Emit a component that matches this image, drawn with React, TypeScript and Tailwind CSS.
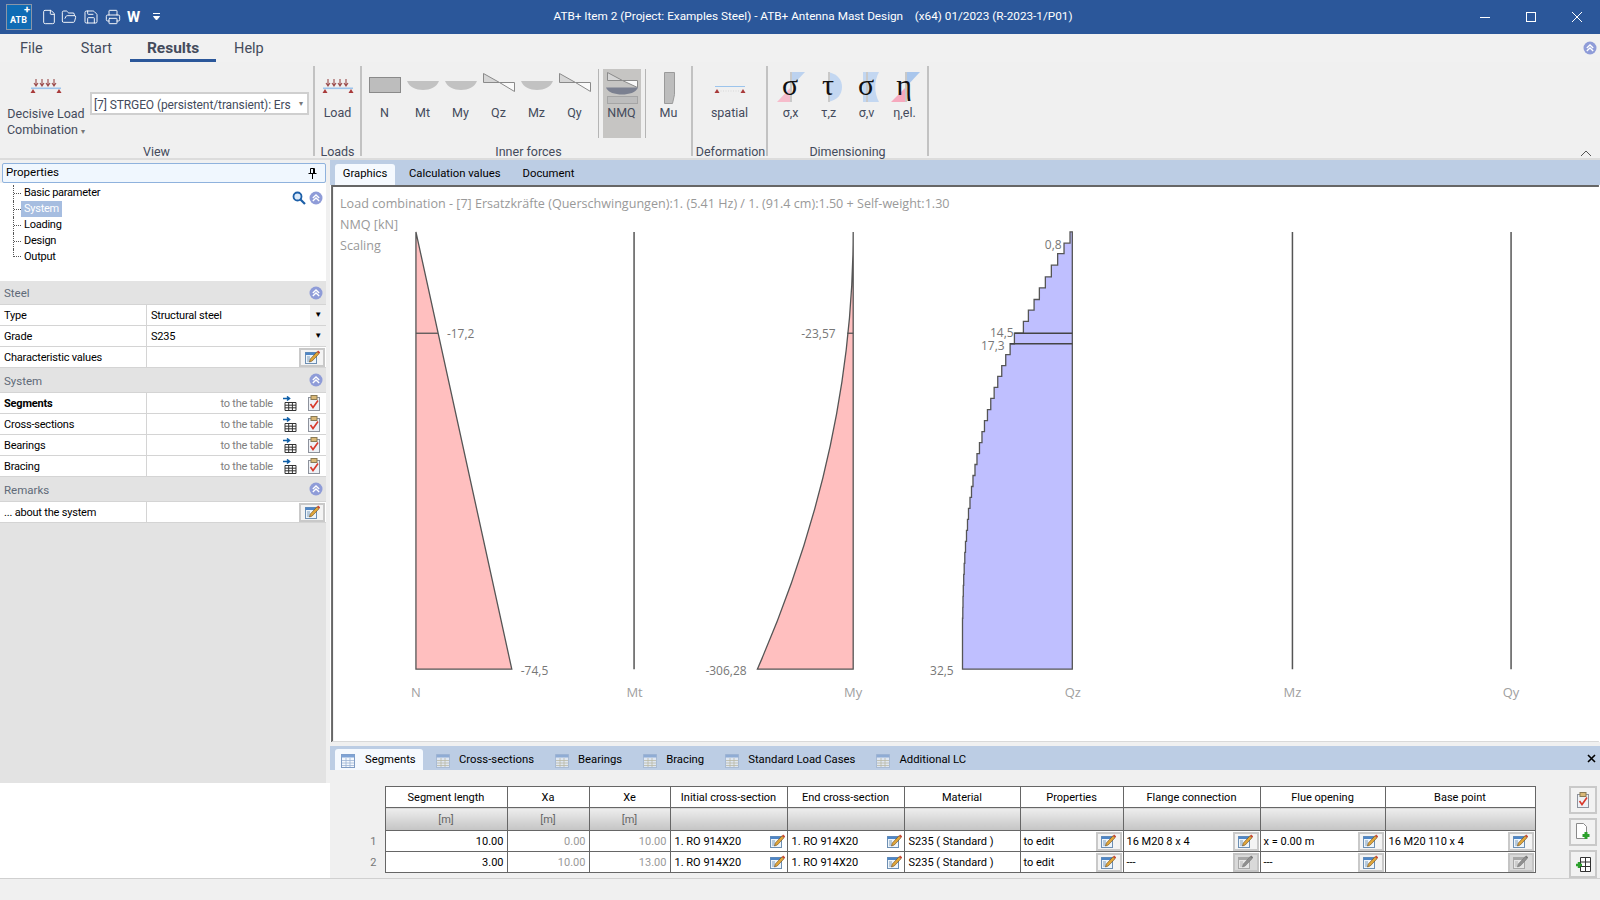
import type { ReactNode } from "react"
import { File, FolderOpen, Printer, Save } from "lucide-react"

function ChevronCircle() {
  return (
    <svg width="14" height="14" viewBox="0 0 14 14" className="shrink-0">
      <circle cx="7" cy="7" r="6.5" fill="#8f9cd8" />
      <path d="M3.8 7 7 4l3.2 3M3.8 10 7 7l3.2 3" fill="none" stroke="#fff" strokeWidth="1.3" />
    </svg>
  )
}

function EditIcon({ off = false }: { off?: boolean }) {
  return (
    <svg width="15" height="14" viewBox="0 0 15 14">
      <rect x="0.5" y="2.5" width="11" height="11" fill={off ? "#e6e6e6" : "#eef5fb"} stroke={off ? "#a8a8a8" : "#6d8fb3"} />
      <rect x="0.5" y="2.5" width="11" height="2.5" fill={off ? "#a8a8a8" : "#4f86c6"} />
      <path d="M2 7h3M2 9h3M2 11h3" stroke={off ? "#b5b5b5" : "#7f9ebd"} />
      <path d="m4.5 12 .8-3L12 1.8 14 3.8 7.2 11z" fill={off ? "#8f8f8f" : "#e0a63a"} stroke={off ? "#777" : "#6a4a1c"} strokeWidth="0.6" />
      <path d="m12 1.8 1.2-1.3 2 2L14 3.8z" fill={off ? "#777" : "#c8452f"} />
    </svg>
  )
}

function ClipboardIcon() {
  return (
    <svg width="14" height="16" viewBox="0 0 14 16">
      <rect x="1.5" y="2.5" width="11" height="13" fill="#eef1f6" stroke="#8d929c" />
      <rect x="4" y="0.5" width="6" height="4" fill="#d9b877" stroke="#8a7a55" />
      <path d="m3.5 9 2.5 3.5 5-7" fill="none" stroke="#d8392b" strokeWidth="1.6" />
    </svg>
  )
}

function TableArrowIcon() {
  return (
    <svg width="15" height="15" viewBox="0 0 15 15">
      <path d="M3 6.5h11v8H3zM3 9.2h11M3 11.8h11M6.7 6.5v8M10.4 6.5v8" fill="#fff" stroke="#333" />
      <path d="M1 2.5h6M5 .5l2.5 2L5 4.5" fill="none" stroke="#0f5fa8" strokeWidth="1.6" />
    </svg>
  )
}

function TabGridIcon({ active = false }: { active?: boolean }) {
  return (
    <svg width="14" height="14" viewBox="0 0 14 14" className="shrink-0">
      <rect x="0.5" y="0.5" width="13" height="13" fill={active ? "#f4f8fd" : "#dfe7f2"} stroke={active ? "#7f9cc4" : "#a9bbd4"} />
      <rect x="0.5" y="0.5" width="13" height="3" fill={active ? "#7ea3d6" : "#8facd4"} />
      <path d="M1 6.5h12M1 9h12M1 11.5h12M5 4v9M9 4v9" stroke={active ? "#9db4d4" : "#b9b9a5"} strokeWidth="0.8" />
    </svg>
  )
}

function SupportBeam() {
  return (
    <svg width="32" height="16" viewBox="0 0 32 16">
      {[6, 12, 18, 24].map((x) => (
        <path key={x} d={`M${x} 1v6m-2-2 2 3 2-3`} fill="none" stroke="#9a4a4a" strokeWidth="1.1" />
      ))}
      <rect x="1" y="9.5" width="30" height="1.6" fill="#9cc4ec" />
      <path d="M3 11l-2.5 4h5zM29 11l-2.5 4h5z" fill="#a83a3a" />
    </svg>
  )
}

function BarIcon() {
  return (
    <svg width="38" height="36" viewBox="0 0 38 36">
      <rect x="3.5" y="8.5" width="31" height="15" fill="#bdbdbd" stroke="#8a8a8a" />
    </svg>
  )
}

function MomentIcon() {
  return (
    <svg width="38" height="36" viewBox="0 0 38 36">
      <path d="M3 12h32c-2 6-9 9-16 9S5 18 3 12z" fill="#c2c2c2" />
    </svg>
  )
}

function ShearIcon() {
  return (
    <svg width="38" height="36" viewBox="0 0 38 36">
      <path d="M3.5 4.5v9h16z" fill="#d6d6d6" stroke="#8a8a8a" />
      <path d="M19.5 13.5h15v9z" fill="#fafafa" stroke="#8a8a8a" />
    </svg>
  )
}

function NmqIcon() {
  return (
    <svg width="38" height="36" viewBox="0 0 38 36">
      <path d="M4.5 3.5v8h15z" fill="#d6d6d6" stroke="#8a8a8a" />
      <path d="M19.5 11.5h15v7z" fill="#fafafa" stroke="#8a8a8a" />
      <path d="M3 18.5h32c-2 5-9 7-16 7s-14-2-16-7z" fill="#7b8090" />
      <rect x="4.5" y="27.5" width="30" height="7" fill="#bdbdbd" stroke="#a5a5a5" />
    </svg>
  )
}

function MuIcon() {
  return (
    <svg width="38" height="36" viewBox="0 0 38 36">
      <path d="M14.5 3.5h10v22l-2 9h-8z" fill="#bdbdbd" stroke="#9a9a9a" />
    </svg>
  )
}

function SpatialIcon() {
  return (
    <svg width="38" height="36" viewBox="0 0 38 36">
      <rect x="4" y="17" width="30" height="1" fill="#9cc4ec" />
      <path d="M7 22h24" stroke="#d8d8d8" strokeDasharray="1 1.5" />
      <path d="M6 20l-2.5 4h5zM32 20l-2.5 4h5z" fill="#a83a3a" />
    </svg>
  )
}

function StressIcon({ glyph, kind }: { glyph: string; kind: "sx" | "tz" | "sv" | "eta" }) {
  return (
    <svg width="38" height="36" viewBox="0 0 38 36">
      {kind === "sx" && (
        <>
          <path d="M19 3h14L19 18z" fill="#bcd2ef" />
          <path d="M19 18v15H5z" fill="#f6bccb" />
        </>
      )}
      {kind === "tz" && <path d="M18 3c10 2 14 8 14 15s-4 13-14 15z" fill="#c3d7f1" />}
      {kind === "sv" && <path d="M15 3h16c-5 9-5 21 0 30H15z" fill="#c3d7f1" />}
      {kind === "eta" && (
        <>
          <path d="M20 3h14L20 18z" fill="#a9c6ec" />
          <path d="M20 18v15H5z" fill="#f6a9bd" />
        </>
      )}
      <rect x={kind === "eta" ? 19 : 18} y="3" width="2" height="30" fill="#c9c9c9" />
      <text x="18" y="26" textAnchor="middle" fontSize="30" fill="#111" className="font-['Liberation_Serif',serif]">
        {glyph}
      </text>
    </svg>
  )
}

function RibbonButton({ icon, label, active = false }: { icon: ReactNode; label: string; active?: boolean }) {
  return (
    <div className={`flex h-[69px] w-[38px] flex-col items-center ${active ? "bg-[#c6c5c3]" : ""}`}>
      <div className="h-[36px]">{icon}</div>
      <span className="text-[12.5px] leading-4 whitespace-nowrap text-[#444b5c]">{label}</span>
    </div>
  )
}

function RibbonGroup({
  label,
  width,
  labelPad = "",
  children,
}: {
  label: string
  width: string
  labelPad?: string
  children: ReactNode
}) {
  return (
    <div className={`flex h-[90px] flex-col border-r-2 border-[#c2c2c2] ${width}`}>
      <div className="flex flex-1 justify-center pt-[3px]">{children}</div>
      <div className={`-mb-[3px] text-center text-[12.5px] leading-[14px] whitespace-nowrap text-[#444b5c] ${labelPad}`}>
        {label}
      </div>
    </div>
  )
}

function Ribbon() {
  return (
    <div className="flex h-[98px] border-b-2 border-[#dcdcdc] bg-[#f0f0f0] pt-1">
      <div className="flex h-[90px] w-[315px] flex-col border-r-2 border-[#c2c2c2]">
        <div className="flex flex-1">
          <div className="flex w-[92px] flex-col items-center pt-3 text-[12.5px] leading-4 text-[#444b5c]">
            <SupportBeam />
            <span className="mt-[12px]">Decisive Load</span>
            <span>
              Combination <span className="text-[8px] text-[#777]">▾</span>
            </span>
          </div>
          <div className="mt-[26px] -ml-[2px] flex h-[23px] w-[219px] items-center justify-between overflow-hidden border-2 border-[#cfcfcf] bg-white pr-1 pl-[2px]">
            <span className="pt-[2px] text-[12px] tracking-[-0.1px] whitespace-nowrap text-[#444b5c]">
              [7] STRGEO (persistent/transient): Ers
            </span>
            <span className="text-[8px] text-[#777]">▾</span>
          </div>
        </div>
        <div className="-mb-[3px] text-center text-[12.5px] leading-[14px] text-[#444b5c]">View</div>
      </div>
      <RibbonGroup label="Loads" width="w-[47px]">
        <div className="flex h-[69px] w-[38px] flex-col items-center">
          <div className="flex h-[36px] items-start pt-[9px]">
            <SupportBeam />
          </div>
          <span className="text-[12.5px] leading-4 text-[#444b5c]">Load</span>
        </div>
      </RibbonGroup>
      <RibbonGroup label="Inner forces" width="w-[331px]" labelPad="pl-[4px]">
        <div className="flex">
          <RibbonButton icon={<BarIcon />} label="N" />
          <RibbonButton icon={<MomentIcon />} label="Mt" />
          <RibbonButton icon={<MomentIcon />} label="My" />
          <RibbonButton icon={<ShearIcon />} label="Qz" />
          <RibbonButton icon={<MomentIcon />} label="Mz" />
          <RibbonButton icon={<ShearIcon />} label="Qy" />
          <div className="mr-[4px] ml-[4px] h-[69px] w-[1px] bg-[#b5b5b5]" />
          <RibbonButton icon={<NmqIcon />} label="NMQ" active />
          <div className="mr-[4px] ml-[4px] h-[69px] w-[1px] bg-[#b5b5b5]" />
          <RibbonButton icon={<MuIcon />} label="Mu" />
        </div>
      </RibbonGroup>
      <RibbonGroup label="Deformation" width="w-[75px]" labelPad="pl-[2px]">
        <RibbonButton icon={<SpatialIcon />} label="spatial" />
      </RibbonGroup>
      <RibbonGroup label="Dimensioning" width="w-[161px]">
        <RibbonButton icon={<StressIcon glyph="σ" kind="sx" />} label="σ,x" />
        <RibbonButton icon={<StressIcon glyph="τ" kind="tz" />} label="τ,z" />
        <RibbonButton icon={<StressIcon glyph="σ" kind="sv" />} label="σ,v" />
        <RibbonButton icon={<StressIcon glyph="η" kind="eta" />} label="η,el." />
      </RibbonGroup>
      <div className="flex flex-1 items-end justify-end pr-2 pb-[1px]">
        <svg width="12" height="7" viewBox="0 0 12 7">
          <path d="M1 6l5-5 5 5" fill="none" stroke="#555" />
        </svg>
      </div>
    </div>
  )
}

function TitleBar() {
  return (
    <div className="flex h-[34px] items-center bg-[#2b579a] text-white">
      <div className="flex w-[164px] items-center">
        <div className="ml-[6px] flex h-[26px] w-[26px] flex-col items-end border border-[#8a96a8] bg-[#0f6cb5] pr-[1px] text-[9px] leading-[10px] font-bold">
          <span className="text-[11px] leading-[10px]">+</span>
          <span className="w-full text-center">ATB</span>
        </div>
        <File size={16} strokeWidth={1.4} className="ml-[9px]" />
        <FolderOpen size={16} strokeWidth={1.4} className="ml-[4px]" />
        <Save size={16} strokeWidth={1.4} className="ml-[6px]" />
        <Printer size={16} strokeWidth={1.4} className="ml-[6px]" />
        <span className="ml-[6px] text-[15px] leading-none font-bold">W</span>
        <svg width="7" height="8" viewBox="0 0 7 8" className="ml-[13px]">
          <path d="M0 .5h7M.5 3.5h6L3.5 7z" stroke="#fff" fill="#fff" />
        </svg>
      </div>
      <div className="flex-1 text-center text-[11.75px] whitespace-pre">
        ATB+ Item 2 (Project: Examples Steel) - ATB+ Antenna Mast Design    (x64) 01/2023 (R-2023-1/P01)
      </div>
      <div className="flex w-[138px]">
        <div className="flex w-[46px] justify-center">
          <svg width="10" height="10" viewBox="0 0 10 10">
            <path d="M0 5.5h10" stroke="#fff" />
          </svg>
        </div>
        <div className="flex w-[46px] justify-center">
          <svg width="10" height="10" viewBox="0 0 10 10">
            <rect x="0.5" y="0.5" width="9" height="9" fill="none" stroke="#fff" />
          </svg>
        </div>
        <div className="flex w-[46px] justify-center">
          <svg width="10" height="10" viewBox="0 0 10 10">
            <path d="M0 0l10 10M10 0 0 10" stroke="#fff" />
          </svg>
        </div>
      </div>
    </div>
  )
}

function MenuBar() {
  return (
    <div className="flex h-[28px] items-center bg-[#f1f1f1] pr-[3px] text-[14.5px] text-[#444b5c]">
      <span className="ml-[20px] pt-[2px]">File</span>
      <span className="ml-[38px] pt-[2px]">Start</span>
      <span className="ml-[18px] flex h-[28px] w-[86px] items-center justify-center border-b-[3px] border-[#2b579a] pt-[5px] text-[15.5px] font-bold">
        Results
      </span>
      <span className="ml-[18px] pt-[2px]">Help</span>
      <span className="ml-auto">
        <ChevronCircle />
      </span>
    </div>
  )
}

const treeItems = ["Basic parameter", "System", "Loading", "Design", "Output"]

function Tree() {
  return (
    <div className="flex h-[98px] justify-between bg-white pt-[2px] pr-[3px] pl-[13px]">
      <div>
        {treeItems.map((item, i) => (
          <div key={item} className="flex h-4 items-stretch">
            <span
              className={
                i === treeItems.length - 1
                  ? "h-[8px] w-[8px] border-b border-l border-dotted border-[#555]"
                  : "flex w-[8px] items-center border-l border-dotted border-[#555]"
              }
            >
              {i !== treeItems.length - 1 && <span className="w-full border-t border-dotted border-[#555]" />}
            </span>
            <span
              className={`px-[3px] text-[11px] leading-4 tracking-[-0.25px] ${
                item === "System" ? "bg-[#a6bde0] text-white" : "text-black"
              }`}
            >
              {item}
            </span>
          </div>
        ))}
      </div>
      <div className="flex items-start gap-[3px] pt-[6px]">
        <svg width="14" height="14" viewBox="0 0 14 14">
          <circle cx="5.5" cy="5.5" r="4" fill="#dbeafa" stroke="#1c5fa8" strokeWidth="1.8" />
          <path d="m8.5 8.5 4.5 4.5" stroke="#1c5fa8" strokeWidth="2.2" />
        </svg>
        <ChevronCircle />
      </div>
    </div>
  )
}

function SectionHeader({ title, short = false }: { title: string; short?: boolean }) {
  return (
    <div
      className={`flex items-center justify-between border-b border-[#d4d4d4] bg-[#e3e3e3] pr-[3px] pl-1 text-[11.5px] text-[#606a78] ${
        short ? "h-[24px]" : "h-[25px]"
      }`}
    >
      <span className={short ? "pt-[3px]" : "pt-[4px]"}>{title}</span>
      <ChevronCircle />
    </div>
  )
}

function EditButton({ off = false }: { off?: boolean }) {
  return (
    <span
      className={`flex h-[19px] w-[26px] shrink-0 items-center justify-center border-2 ${
        off ? "border-[#c4c4c4] bg-[#d9d9d9]" : "border-[#c9c9c9] bg-[#f4f4f4]"
      }`}
    >
      <EditIcon off={off} />
    </span>
  )
}

function PropRow({ label, bold = false, children }: { label: string; bold?: boolean; children?: ReactNode }) {
  return (
    <div className="flex h-[21px] items-stretch border-b border-[#d4d4d4] bg-white text-[11px] tracking-[-0.2px] text-black">
      <div className={`flex w-[147px] items-center border-r border-[#d4d4d4] pt-[3px] pl-1 ${bold ? "font-bold" : ""}`}>
        {label}
      </div>
      <div className="flex flex-1 items-center">{children}</div>
    </div>
  )
}

function DropValue({ value }: { value: string }) {
  return (
    <>
      <span className="flex-1 pt-[3px] pl-1">{value}</span>
      <span className="flex h-full w-[16px] items-center justify-center bg-[#f0f0f0] text-[8px]">▼</span>
    </>
  )
}

function TableLink() {
  return (
    <div className="flex w-full items-center justify-end pr-[5px] text-[#808080]">
      <span className="mr-[9px] pt-[3px]">to the table</span>
      <TableArrowIcon />
      <span className="ml-[10px]">
        <ClipboardIcon />
      </span>
    </div>
  )
}

function LeftPanel() {
  return (
    <div className="flex w-[330px] shrink-0 flex-col bg-[#f0f0f0]">
      <div className="w-[326px] flex-col">
        <div className="pt-[3px] pl-[2px]">
          <div className="flex h-[20px] items-center justify-between rounded-[2px] border border-[#8fb2dd] bg-[#f0f7fe] pr-[8px] pl-[3px] text-[11.5px] text-black">
            Properties
            <svg width="9" height="11" viewBox="0 0 9 11">
              <path d="M2.5.5h4v5h-4zM.5 5.5h8M4.5 5.5V11" fill="none" stroke="#000" />
              <path d="M5.5 1v4" stroke="#000" />
            </svg>
          </div>
        </div>
        <Tree />
        <SectionHeader title="Steel" short />
        <PropRow label="Type">
          <DropValue value="Structural steel" />
        </PropRow>
        <PropRow label="Grade">
          <DropValue value="S235" />
        </PropRow>
        <PropRow label="Characteristic values">
          <span className="mr-[1px] ml-auto">
            <EditButton />
          </span>
        </PropRow>
        <SectionHeader title="System" />
        <PropRow label="Segments" bold>
          <TableLink />
        </PropRow>
        <PropRow label="Cross-sections">
          <TableLink />
        </PropRow>
        <PropRow label="Bearings">
          <TableLink />
        </PropRow>
        <PropRow label="Bracing">
          <TableLink />
        </PropRow>
        <SectionHeader title="Remarks" />
        <PropRow label="... about the system">
          <span className="mr-[1px] ml-auto">
            <EditButton />
          </span>
        </PropRow>
        <div className="h-[260px] bg-[#e3e3e3]" />
      </div>
      <div className="flex-1 bg-white" />
    </div>
  )
}

const qzSteps: [number, number][] = [
  [231, 2.3], [242.3, 8.3], [252.7, 14.7], [264.3, 21], [276, 27], [287, 33], [298.7, 38.3], [309.3, 44], [320.7, 49],
  [332.3, 58], [343, 62.3], [354, 66.7], [365, 70.7], [375.7, 74.7], [386.7, 78.3], [397.7, 81.7], [409, 85], [420, 88],
  [431, 90.5], [442, 93], [453, 95.5], [464, 97.5], [475, 99.5], [486, 101], [497, 102.5], [508, 104], [519, 105],
  [530, 106], [541, 107], [552, 107.7], [563, 108.3], [574, 108.8], [585, 109.2], [596, 109.5], [607, 109.7], [618, 110],
]

const qzPath =
  "M1072.5 231" +
  qzSteps.map(([y, w], i) => `H${1072.5 - w}V${i + 1 < qzSteps.length ? qzSteps[i + 1][0] : 669}`).join("") +
  "H1072.5Z"

function Chart() {
  const labelClass = "fill-[#777] text-[12px]"
  const axisClass = "fill-[#a0a0a0] text-[13px]"
  const infoClass = "fill-[#999] text-[12.6px]"
  return (
    <svg viewBox="330 184 1270 558" width="1270" height="558" className="block bg-white font-['Open_Sans',sans-serif]">
      <path d="M330 185H1600M331 184V742" stroke="#666" strokeWidth="2" />
      <path d="M331 741.5H1600" stroke="#d8d8d8" />
      <text x="339" y="207" className={infoClass}>
        Load combination - [7] Ersatzkräfte (Querschwingungen):1. (5.41 Hz) / 1. (91.4 cm):1.50 + Self-weight:1.30
      </text>
      <text x="339" y="228" className={infoClass}>NMQ [kN]</text>
      <text x="339" y="249" className={infoClass}>Scaling</text>

      <path d="M415 231 511 669H415Z" fill="#ffbfbf" stroke="#555" strokeWidth="1.3" />
      <path d="M415 332.5H437" stroke="#555" strokeWidth="1.3" />
      <text x="446" y="337" className={labelClass}>-17,2</text>
      <text x="520" y="675" className={labelClass}>-74,5</text>
      <text x="415" y="697" textAnchor="middle" className={axisClass}>N</text>

      <path d="M633.5 231V669" stroke="#555" strokeWidth="1.5" />
      <text x="634" y="697" textAnchor="middle" className={axisClass}>Mt</text>

      <path d="M853 231Q853 450 757 669H853Z" fill="#ffbfbf" stroke="#555" strokeWidth="1.3" />
      <path d="M847 332.5H853" stroke="#555" strokeWidth="1.3" />
      <text x="801" y="337" className={labelClass}>-23,57</text>
      <text x="705" y="675" className={labelClass}>-306,28</text>
      <text x="853" y="697" textAnchor="middle" className={axisClass}>My</text>

      <path d={qzPath} fill="#bfbfff" stroke="#555" strokeWidth="1.3" />
      <path d="M1014.5 332.5H1072.5M1010 343H1072.5" stroke="#444" strokeWidth="1.3" />
      <text x="1045" y="248" className={labelClass}>0,8</text>
      <text x="990" y="336" className={labelClass}>14,5</text>
      <text x="981" y="349" className={labelClass}>17,3</text>
      <text x="930" y="675" className={labelClass}>32,5</text>
      <text x="1073" y="697" textAnchor="middle" className={axisClass}>Qz</text>

      <path d="M1293 231V669" stroke="#555" strokeWidth="1.5" />
      <text x="1293" y="697" textAnchor="middle" className={axisClass}>Mz</text>

      <path d="M1512 231V669" stroke="#555" strokeWidth="1.5" />
      <text x="1512" y="697" textAnchor="middle" className={axisClass}>Qy</text>
    </svg>
  )
}

const headers = [
  "Segment length", "Xa", "Xe", "Initial cross-section", "End cross-section",
  "Material", "Properties", "Flange connection", "Flue opening", "Base point",
]
const units = ["[m]", "[m]", "[m]", "", "", "", "", "", "", ""]

const rows = [
  { n: 1, len: "10.00", xa: "0.00", xe: "10.00", flange: "16 M20 8 x 4", flangeOff: false, flue: "x = 0.00 m", base: "16 M20 110 x 4", baseOff: false },
  { n: 2, len: "3.00", xa: "10.00", xe: "13.00", flange: "---", flangeOff: true, flue: "---", base: "", baseOff: true },
]

function ButtonCell({ value, off = false }: { value: string; off?: boolean }) {
  return (
    <td className="border border-[#666] bg-white p-0">
      <div className="flex h-[20px] items-center justify-between pr-[1px] pl-[3px]">
        <span className="pt-[2px] whitespace-nowrap">{value}</span>
        <EditButton off={off} />
      </div>
    </td>
  )
}

function SectionCell({ value }: { value: string }) {
  return (
    <td className="border border-[#666] bg-white p-0">
      <div className="flex h-[20px] items-center justify-between pr-[2px] pl-[4px]">
        <span className="pt-[2px] whitespace-nowrap">{value}</span>
        <EditIcon />
      </div>
    </td>
  )
}

function SegmentTable() {
  return (
    <table className="table-fixed self-start border-collapse text-[11px] text-black">
      <colgroup>
        <col className="w-[55px]" />
        <col className="w-[122px]" />
        <col className="w-[82px]" />
        <col className="w-[81px]" />
        <col className="w-[117px]" />
        <col className="w-[117px]" />
        <col className="w-[116px]" />
        <col className="w-[103px]" />
        <col className="w-[137px]" />
        <col className="w-[125px]" />
        <col className="w-[150px]" />
      </colgroup>
      <thead>
        <tr className="h-[21px]">
          <th className="p-0" />
          {headers.map((h) => (
            <th key={h} className="border border-[#666] bg-white p-0 pt-[3px] font-normal">
              {h}
            </th>
          ))}
        </tr>
        <tr className="h-[23px]">
          <th className="p-0" />
          {units.map((u, i) => (
            <th
              key={i}
              className="border border-[#666] bg-linear-to-b from-[#eeeeee] to-[#c4c4c4] p-0 pt-[3px] font-normal text-[#666]"
            >
              {u}
            </th>
          ))}
        </tr>
      </thead>
      <tbody>
        {rows.map((r) => (
          <tr key={r.n} className="h-[21px]">
            <td className="p-0 pt-[2px] pr-[8px] text-right text-[#777]">{r.n}</td>
            <td className="border border-[#666] bg-white p-0 pt-[2px] pr-[3px] text-right">{r.len}</td>
            <td className="border border-[#666] bg-white p-0 pt-[2px] pr-[3px] text-right text-[#999]">{r.xa}</td>
            <td className="border border-[#666] bg-white p-0 pt-[2px] pr-[3px] text-right text-[#999]">{r.xe}</td>
            <SectionCell value="1. RO 914X20" />
            <SectionCell value="1. RO 914X20" />
            <td className="border border-[#666] bg-white p-0 pt-[2px] pl-[4px]">S235 ( Standard )</td>
            <ButtonCell value="to edit" />
            <ButtonCell value={r.flange} off={r.flangeOff} />
            <ButtonCell value={r.flue} />
            <ButtonCell value={r.base} off={r.baseOff} />
          </tr>
        ))}
      </tbody>
    </table>
  )
}

function SideButton({ children }: { children: ReactNode }) {
  return (
    <div className="flex h-[28px] w-[28px] items-center justify-center border-2 border-[#c9c9c9] bg-[#f2f2f2]">{children}</div>
  )
}

const bottomTabs = ["Cross-sections", "Bearings", "Bracing", "Standard Load Cases", "Additional LC"]

function BottomPanel() {
  return (
    <div className="flex flex-1 flex-col">
      <div className="flex h-[24px] items-end bg-[#bccde4] pl-[5px] text-[11.3px] text-black">
        <div className="flex h-[21px] w-[88px] items-center gap-[10px] rounded-t-[3px] bg-[#f5f9fe] pt-[2px] pl-[6px]">
          <TabGridIcon active />
          Segments
        </div>
        {bottomTabs.map((t) => (
          <div key={t} className="mr-[8px] ml-[13px] flex h-[21px] items-center gap-[9px] pt-[2px] whitespace-nowrap">
            <TabGridIcon />
            {t}
          </div>
        ))}
        <div className="ml-auto flex h-full items-center pr-[4px]">
          <svg width="9" height="9" viewBox="0 0 9 9">
            <path d="M1 1l7 7M8 1 1 8" stroke="#000" strokeWidth="1.6" />
          </svg>
        </div>
      </div>
      <div className="flex flex-1 justify-between bg-[#f0f0f0] pt-4 pr-[3px]">
        <SegmentTable />
        <div className="flex flex-col gap-[4px]">
          <SideButton>
            <ClipboardIcon />
          </SideButton>
          <SideButton>
            <svg width="16" height="18" viewBox="0 0 16 18">
              <path d="M1.5.5h7l3 3v12h-10z" fill="#fff" stroke="#8a8a8a" />
              <path d="M11 9v7M7.5 12.5h7" stroke="#2ca02c" strokeWidth="3" />
            </svg>
          </SideButton>
          <SideButton>
            <svg width="17" height="17" viewBox="0 0 17 17">
              <path d="M5.5 1.5h10v14h-10zM5.5 6h10M5.5 10.5h10M10.5 1.5v14" fill="#fff" stroke="#333" />
              <path d="M4 6v6M1 9h6" stroke="#2ca02c" strokeWidth="2.4" />
            </svg>
          </SideButton>
        </div>
      </div>
    </div>
  )
}

function MainArea() {
  return (
    <div className="flex w-[1270px] flex-col">
      <div className="flex h-[25px] items-end bg-[#bccde4] pl-[5px] text-[11.3px] text-black">
        <div className="flex h-[21px] w-[60px] items-center justify-center rounded-t-[3px] bg-[#f5f9fe]">Graphics</div>
        <div className="ml-[14px] flex h-[21px] items-center">Calculation values</div>
        <div className="ml-[22px] flex h-[21px] items-center">Document</div>
      </div>
      <Chart />
      <div className="h-[4px] bg-[#f0f0f0]" />
      <BottomPanel />
    </div>
  )
}

export default function App() {
  return (
    <div className="flex h-[900px] w-[1600px] flex-col overflow-hidden bg-[#f0f0f0] font-[Roboto,sans-serif]">
      <TitleBar />
      <MenuBar />
      <Ribbon />
      <div className="flex h-[718px]">
        <LeftPanel />
        <MainArea />
      </div>
      <div className="h-[22px] border-t border-[#d0d0d0] bg-[#f0f0f0]" />
    </div>
  )
}
